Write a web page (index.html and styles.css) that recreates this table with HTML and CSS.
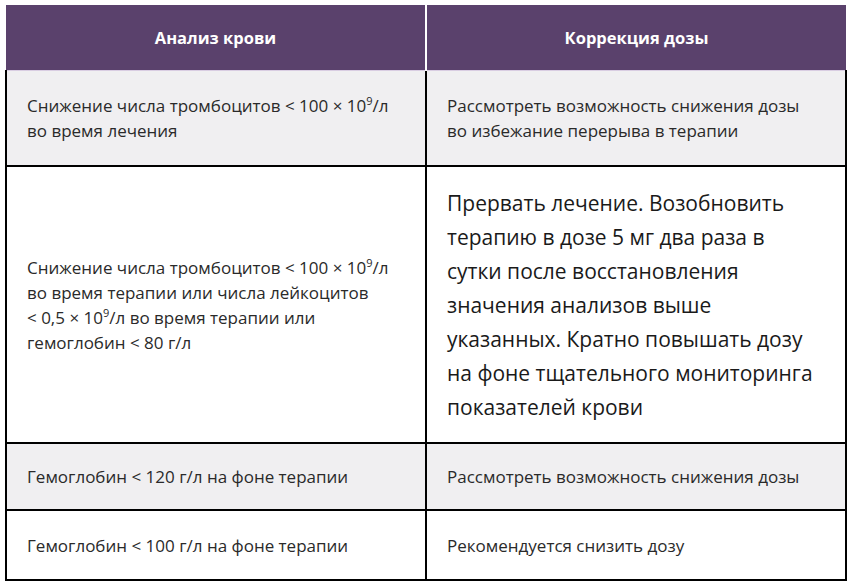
FILE: index.html
```html
<!DOCTYPE html>
<html lang="ru">
<head>
<meta charset="utf-8">
<link rel="stylesheet" href="styles.css">
</head>
<body>
<div class="wrap">
<table class="dose">
  <colgroup><col class="c1"><col class="c2"></colgroup>
  <thead>
    <tr><th class="h1">Анализ крови</th><th>Коррекция дозы</th></tr>
  </thead>
  <tbody>
    <tr class="r1 shade">
      <td>Снижение числа тромбоцитов &lt; 100 × 10<sup>9</sup>/л<br>во время лечения</td>
      <td>Рассмотреть возможность снижения дозы<br>во избежание перерыва в терапии</td>
    </tr>
    <tr class="r2">
      <td>Снижение числа тромбоцитов &lt; 100 × 10<sup>9</sup>/л<br>во время терапии или числа лейкоцитов<br>&lt; 0,5 × 10<sup>9</sup>/л во время терапии или<br>гемоглобин &lt; 80 г/л</td>
      <td class="big">Прервать лечение. Возобновить<br>терапию в дозе 5 мг два раза в<br>сутки после восстановления<br>значения анализов выше<br>указанных. Кратно повышать дозу<br>на фоне тщательного мониторинга<br>показателей крови</td>
    </tr>
    <tr class="r3 shade">
      <td>Гемоглобин &lt; 120 г/л на фоне терапии</td>
      <td>Рассмотреть возможность снижения дозы</td>
    </tr>
    <tr class="r4">
      <td>Гемоглобин &lt; 100 г/л на фоне терапии</td>
      <td>Рекомендуется снизить дозу</td>
    </tr>
  </tbody>
</table>
</div>
</body>
</html>
```
FILE: styles.css
```css
html, body { margin: 0; padding: 0; background: #fff; }
body { font-family: "Open Sans", "Noto Sans", sans-serif; color: #2a2a2a; }
.wrap { padding: 5px 0 0 5px; }
.dose { width: 840px; border-collapse: collapse; table-layout: fixed; }
.c1 { width: 420px; }
.c2 { width: 420px; }
.dose th {
  background: #5a416c; color: #fff; font-weight: 700; font-size: 16.5px;
  height: 65px; padding: 0; text-align: center; vertical-align: middle;
  border-bottom: 1px solid #d9cde2;
}
.dose th.h1 { border-right: 2px solid #fff; }
.dose td {
  border: 2px solid #000; padding: 0 20px; vertical-align: middle;
  font-size: 17px; line-height: 25px; color: #2a2a2a;
}
.dose tbody tr:first-child td { border-top: 0; }
.shade td { background: #f0eff1; }
.r1 td { height: 94px; }
.r2 td { height: 275px; }
.r3 td { height: 65px; }
.r4 td { height: 68px; }
.dose td.big { font-size: 21px; line-height: 34px; color: #1a1a1a; }
sup { font-size: 11px; line-height: 0; vertical-align: 7px; }
```
